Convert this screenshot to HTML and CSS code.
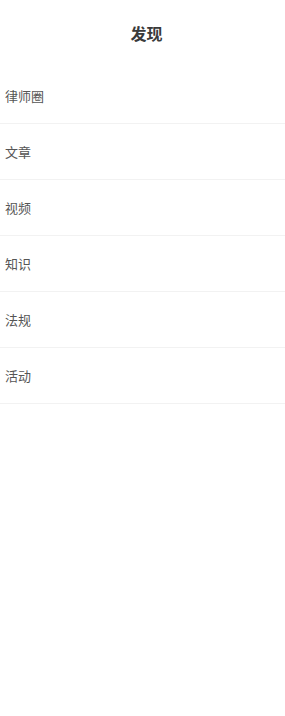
FILE: index.html
```html
<!DOCTYPE html>
<html lang="zh">
<head>
    <meta charset="UTF-8">
    <meta name="viewport" content="width=device-width, initial-scale=1.0">
    <title>发现</title>
    <link rel="stylesheet" href="styles.css">
</head>
<body>

    <!-- 顶部标题 -->
    <div class="header">
        <h1 class="title">发现</h1>
    </div>

    <!-- 发现列表 -->
    <ul class="discover-list">
        <li class="discover-item">律师圈</li>
        <li class="discover-item">文章</li>
        <li class="discover-item">视频</li>
        <li class="discover-item">知识</li>
        <li class="discover-item">法规</li>
        <li class="discover-item">活动</li>
    </ul>

</body>
</html>
```

FILE: styles.css
```css
body {
    margin: 0;
    padding: 0;
    font-family: "Noto Sans CJK SC", "Noto Sans", sans-serif;
    background: #ffffff;
}
/* 顶部标题 */
.header {
    height: 68px;
    display: flex;
    justify-content: center;
    align-items: center;
    padding-left: 8px;
}
.title {
    margin: 0 0 2px 0;
    font-size: 16px;
    font-weight: bold;
    color: #3a3a3a;
    line-height: 20px;
}
/* 列表 */
.discover-list {
    list-style: none;
    margin: 0;
    padding: 0;
}
.discover-item {
    height: 55px;
    display: flex;
    align-items: center;
    padding-left: 5px;
    font-size: 13px;
    color: #555555;
    border-bottom: 1px solid #f2f2f2;
}
```
